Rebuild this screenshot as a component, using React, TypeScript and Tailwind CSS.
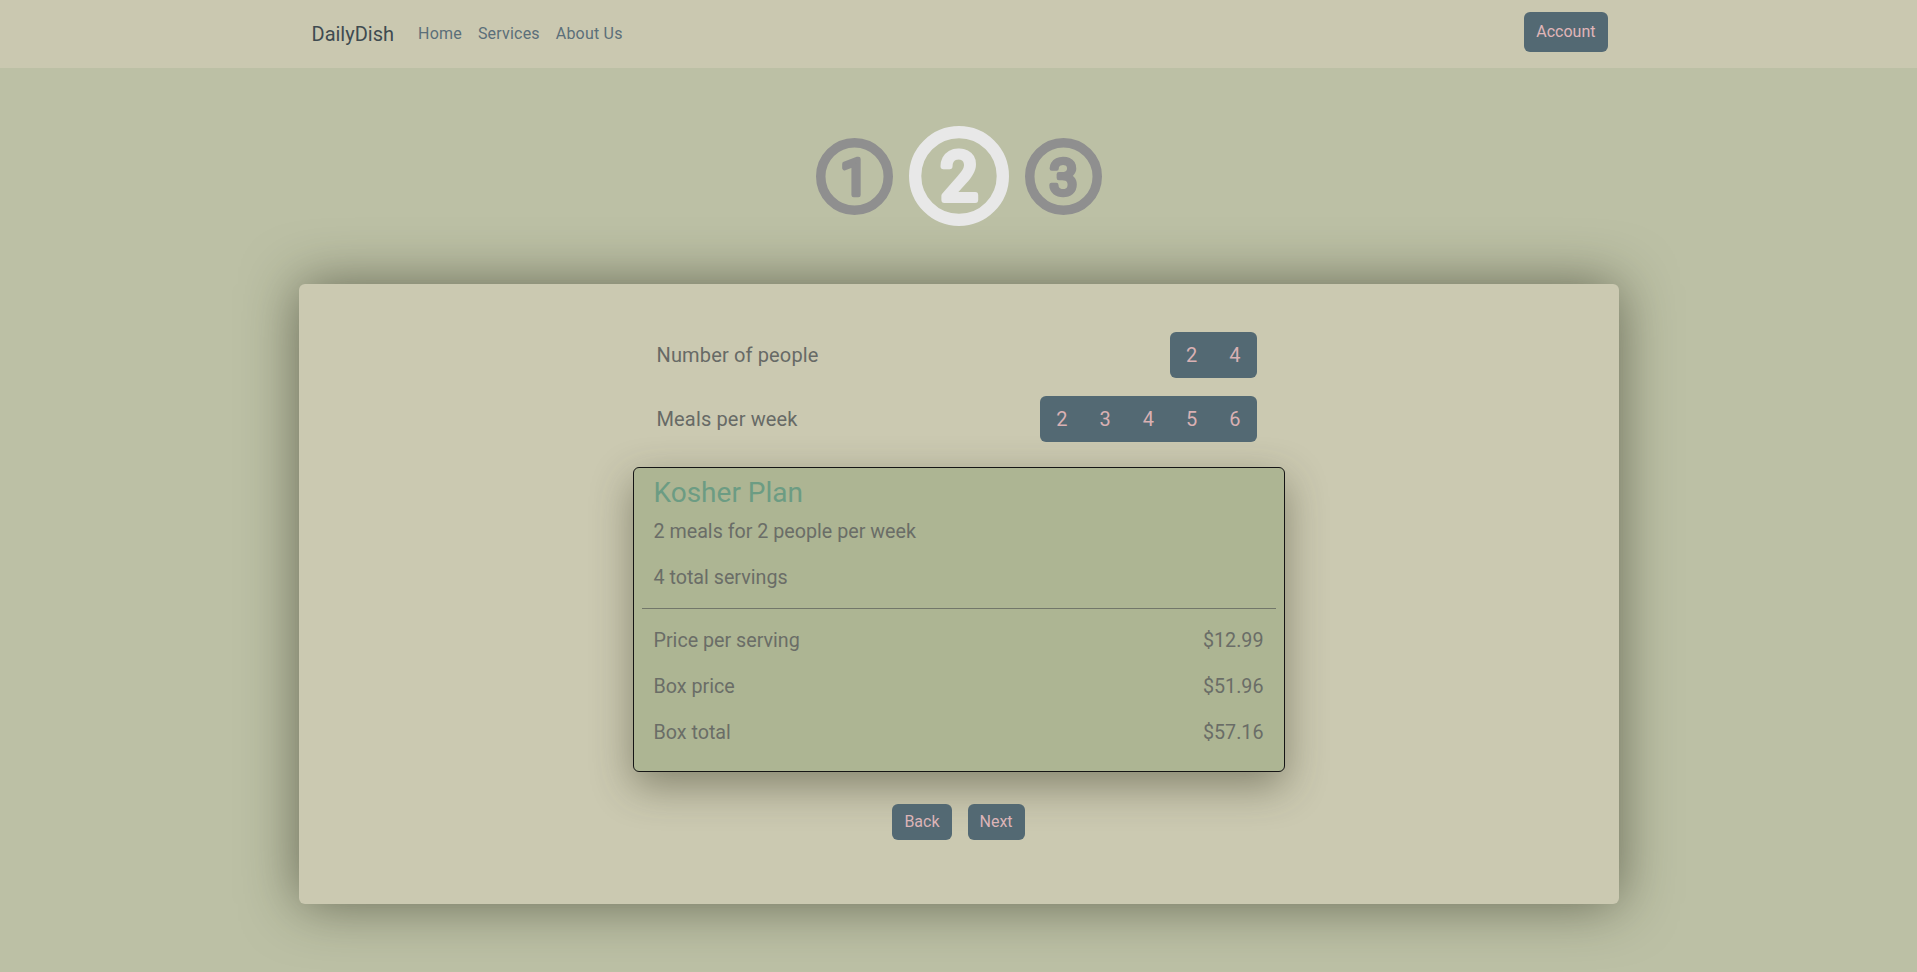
import React from "react";

function StepIcon({ n, size, color }: { n: string; size: number; color: string }) {
  return (
    <svg width={size} height={size} viewBox="0 0 100 100" className="block">
      <circle cx="50" cy="50" r="43.85" fill="none" stroke={color} strokeWidth="12.3" />
      <text
        x="50"
        y="73.5"
        textAnchor="middle"
        fontFamily="Roboto, 'DejaVu Sans', sans-serif"
        fontWeight={400}
        fontSize="66"
        fill={color}
        stroke={color}
        strokeWidth="6"
        strokeLinejoin="round"
        strokeLinecap="round"
      >
        {n}
      </text>
    </svg>
  );
}

function BtnGroup({ items }: { items: string[] }) {
  return (
    <div className="flex rounded-[6px] bg-[#536973] overflow-hidden">
      {items.map((i) => (
        <button
          key={i}
          className="h-[46px] px-4 text-[20px] leading-[30px] text-[#d9b1b3]"
        >
          {i}
        </button>
      ))}
    </div>
  );
}

export default function App() {
  return (
    <div className="min-h-[972px] bg-[#bcc0a5] font-['Roboto','Liberation_Sans',sans-serif]">
      {/* Navbar */}
      <nav className="h-[68px] bg-[#cac8b0]">
        <div className="mx-auto flex h-full w-[1320px] translate-x-[1px] items-center px-[12px]">
          <a className="mr-4 text-[20px] leading-[30px] text-[#3f4b50]">DailyDish</a>
          <a className="px-2 text-[16px] leading-6 tracking-[0.2px] text-[#5b6f79]">Home</a>
          <a className="px-2 text-[16px] leading-6 tracking-[0.2px] text-[#5b6f79]">Services</a>
          <a className="px-2 text-[16px] leading-6 tracking-[0.2px] text-[#5b6f79]">About Us</a>
          <div className="flex-1" />
          <button className="-mt-[4px] h-[40px] rounded-[6px] bg-[#536973] px-3 text-[16px] leading-6 text-[#e0b6b9]">
            Account
          </button>
        </div>
      </nav>

      {/* Steps */}
      <div className="flex h-[216px] items-center justify-center gap-[16px]">
        <StepIcon n="1" size={77} color="#8f8f8f" />
        <StepIcon n="2" size={100} color="#e8e8e8" />
        <StepIcon n="3" size={77} color="#8f8f8f" />
      </div>

      {/* Main card */}
      <div className="mx-auto h-[620px] w-[1320px] rounded-[6px] bg-[#cbc9b1] pt-[48px] shadow-[0_0_55px_rgba(40,42,25,0.58)]">
        <div className="mx-auto w-[612px] pl-[4px] pr-[8px]">
          <div className="flex items-center justify-between">
            <span className="text-[20px] tracking-[0.15px] text-[#676a66]">Number of people</span>
            <BtnGroup items={["2", "4"]} />
          </div>
          <div className="mt-[18px] flex items-center justify-between">
            <span className="text-[20px] tracking-[0.15px] text-[#676a66]">Meals per week</span>
            <BtnGroup items={["2", "3", "4", "5", "6"]} />
          </div>
        </div>

        <div className="mx-auto mt-[25px] w-[652px] rounded-[6px] border border-[#151515] bg-[#adb593] px-[8px] pb-[24px] pt-[9px] shadow-[0_14px_40px_rgba(50,52,30,0.45)]">
          <div className="px-[12px]">
            <h3 className="mb-[9px] text-[28px] leading-[32px] text-[#6c9c83]">Kosher Plan</h3>
            <p className="text-[19.7px] leading-[28px] text-[#6a6d67]">2 meals for 2 people per week</p>
            <p className="mt-[18px] text-[19.7px] leading-[28px] text-[#6a6d67]">4 total servings</p>
          </div>
          <div className="mt-[16px] h-px bg-[#72776a]" />
          <div className="px-[12px] pt-[18px] text-[19.7px] leading-[28px] text-[#6a6d67]">
            <div className="flex justify-between">
              <span>Price per serving</span>
              <span>$12.99</span>
            </div>
            <div className="mt-[18px] flex justify-between">
              <span>Box price</span>
              <span>$51.96</span>
            </div>
            <div className="mt-[18px] flex justify-between">
              <span>Box total</span>
              <span>$57.16</span>
            </div>
          </div>
        </div>

        <div className="mt-[32px] flex justify-center gap-[16px]">
          <button className="h-[36px] rounded-[6px] bg-[#536973] px-3 text-[16px] leading-6 text-[#dcb4b7]">
            Back
          </button>
          <button className="h-[36px] rounded-[6px] bg-[#536973] px-3 text-[16px] leading-6 text-[#dcb4b7]">
            Next
          </button>
        </div>
      </div>
    </div>
  );
}
